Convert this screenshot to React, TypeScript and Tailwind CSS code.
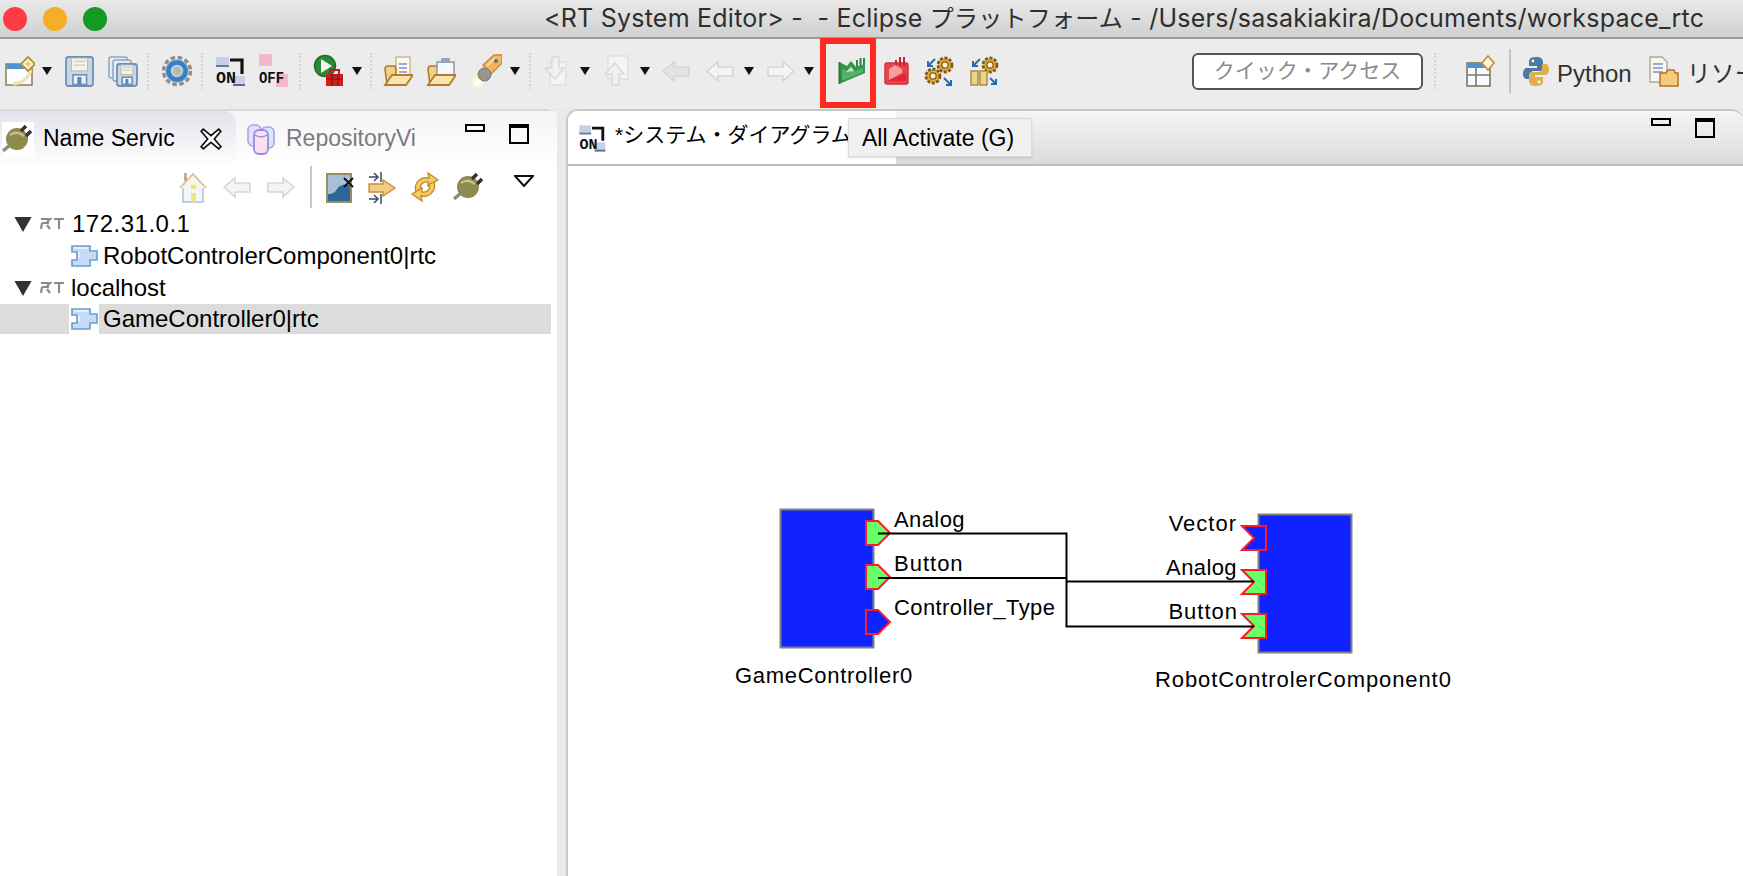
const FONT = "font-['Liberation_Sans','Noto_Sans_CJK_JP',sans-serif]";

function Ico({ children, className = '' }: { children: React.ReactNode; className?: string }) {
  return (
    <svg viewBox="0 0 30 34" className={`w-[30px] h-[34px] shrink-0 ${className}`}>
      {children}
    </svg>
  );
}

function Caret({ className = '' }: { className?: string }) {
  return (
    <svg viewBox="0 0 10 8" className={`w-[10px] h-[8px] shrink-0 mr-[-2px] ${className}`}>
      <path d="M0 0H10L5 8Z" fill="#111" />
    </svg>
  );
}

function Sep({ className = '' }: { className?: string }) {
  return <div className={`w-[2px] h-[36px] shrink-0 border-l-2 border-dotted border-[#d4d4d0] ${className}`} />;
}

const NewIcon = ({ className }: { className?: string }) => (
  <Ico className={className}>
    <rect x="1" y="10" width="26" height="21" fill="#fbfdff" stroke="#8f8458" strokeWidth="1.6" />
    <rect x="1.800" y="10" width="19" height="5" fill="#4f93d2" />
    <path d="M8 30Q22 29 26 16" fill="none" stroke="#efe3b0" strokeWidth="3" />
    <path d="M23 3L30 10L23 17L16 10Z" fill="#fdf6d8" stroke="#b8913a" strokeWidth="1.8" />
    <path d="M23 7V13M20 10H26" stroke="#e4be6a" strokeWidth="1.4" />
  </Ico>
);

const Floppy = ({ x = 2, y = 4, w = 26 }: { x?: number; y?: number; w?: number }) => (
  <g>
    <rect x={x} y={y} width={w} height={w + 2} rx="2.500" fill="#c9d6e6" stroke="#6d8fb8" strokeWidth="1.8" />
    <rect x={x + w * 0.2} y={y + 1} width={w * 0.6} height={w * 0.48} fill="#f3f2ea" stroke="#b9b9a8" strokeWidth="1" />
    <path d={`M${x + w * 0.28} ${y + w * 0.16}H${x + w * 0.72}M${x + w * 0.28} ${y + w * 0.3}H${x + w * 0.72}`} stroke="#c3c3b4" strokeWidth="1" />
    <rect x={x + w * 0.26} y={y + w * 0.66} width={w * 0.5} height={w * 0.36} fill="#eef2f7" stroke="#6d8fb8" strokeWidth="1.6" />
    <rect x={x + w * 0.42} y={y + w * 0.74} width={w * 0.15} height={w * 0.28} fill="#5f86b5" />
  </g>
);

const SaveIcon = ({ className }: { className?: string }) => (
  <Ico className={className}>
    <Floppy x={2} y={3} w={27} />
  </Ico>
);

const SaveAllIcon = ({ className }: { className?: string }) => (
  <Ico className={className}>
    <rect x="1" y="3" width="18" height="21" rx="2" fill="#e6ecf3" stroke="#8ba4c3" strokeWidth="1.5" />
    <rect x="5" y="6" width="18" height="21" rx="2" fill="#e6ecf3" stroke="#8ba4c3" strokeWidth="1.5" />
    <Floppy x={9} y={10} w={20} />
  </Ico>
);

const GearIcon = ({ className }: { className?: string }) => (
  <Ico className={className}>
    <circle cx="15" cy="17" r="13.500" fill="none" stroke="#8e8e8e" strokeWidth="3.500" strokeDasharray="4.500 2.600" />
    <circle cx="15" cy="17" r="11.500" fill="#a8a8a8" />
    <circle cx="15" cy="17" r="8.500" fill="#c8cfd2" stroke="#2f82cc" strokeWidth="4.500" />
    <circle cx="15" cy="17" r="4" fill="#b6b6b2" />
  </Ico>
);

const OnIcon = ({ className }: { className?: string }) => (
  <Ico className={className}>
    <rect x="1" y="3" width="13" height="10" fill="#c6d1e6" />
    <rect x="1" y="11" width="13" height="2" fill="#6f7a90" />
    <path d="M15 6H27V20" fill="none" stroke="#111" strokeWidth="3.200" />
    <rect x="18" y="22" width="12" height="10" fill="#c6d1e6" />
    <rect x="18" y="30" width="12" height="2" fill="#5f6a80" />
    <text x="1" y="29" className="font-['Liberation_Mono',monospace]" fontSize="17" fontWeight="700" fill="#111" textLength="20" lengthAdjust="spacingAndGlyphs">ON</text>
  </Ico>
);

const OffIcon = ({ className }: { className?: string }) => (
  <Ico className={className}>
    <rect x="1" y="0" width="13" height="12" fill="#f5b6cf" />
    <rect x="18" y="20" width="13" height="13" fill="#f5b6cf" />
    <text x="1" y="29" className="font-['Liberation_Mono',monospace]" fontSize="16" fontWeight="700" fill="#111" textLength="25" lengthAdjust="spacingAndGlyphs">OFF</text>
  </Ico>
);

const RunIcon = ({ className }: { className?: string }) => (
  <Ico className={className}>
    <circle cx="12" cy="12" r="10.500" fill="#2c8a34" stroke="#1f6d2a" strokeWidth="1.4" />
    <path d="M8 5L19 12L8 19Z" fill="#f2f6ee" />
    <rect x="13" y="20" width="17" height="12" fill="#d01f1f" />
    <rect x="17" y="16" width="9" height="5" fill="none" stroke="#c01c1c" strokeWidth="2" />
    <path d="M13 25H30M19 20V32M25 20V32" stroke="#7e1212" strokeWidth="1" />
  </Ico>
);

const OpenFile = ({ className }: { className?: string }) => (
  <Ico className={className}>
    <rect x="13" y="3" width="14" height="22" fill="#fdfbf1" stroke="#c9bc8e" strokeWidth="1.5" />
    <path d="M16 10H24M16 14H24M16 18H24" stroke="#7d93c9" strokeWidth="1.6" />
    <path d="M2 15Q2 12 5 12H12L13 16V22L4 31Z" fill="#f3cf88" stroke="#b47a2a" strokeWidth="1.6" />
    <path d="M2 31L9 21H30L23 31Z" fill="#fae3ad" stroke="#b47a2a" strokeWidth="1.8" />
  </Ico>
);

const OpenClip = ({ className }: { className?: string }) => (
  <Ico className={className}>
    <path d="M2 15Q2 12 5 12H12L13 16V22L4 31Z" fill="#f3cf88" stroke="#b47a2a" strokeWidth="1.6" />
    <rect x="11" y="8" width="17" height="15" fill="#f4f7fb" stroke="#8d97a8" strokeWidth="1.5" />
    <rect x="15" y="4" width="9" height="5" rx="1" fill="#97a3b6" />
    <path d="M2 31L9 21H30L23 31Z" fill="#fae3ad" stroke="#b47a2a" strokeWidth="1.8" />
  </Ico>
);

const PenIcon = ({ className }: { className?: string }) => (
  <Ico className={className}>
    <circle cx="6" cy="27" r="6" fill="#fdf8cc" />
    <path d="M1 33L5 23L11 29Z" fill="#ffffff" />
    <path d="M11 11L22 1L30 1L30 9L19 20Z" fill="#f2b660" stroke="#c48a34" strokeWidth="1.300" />
    <path d="M15 12L23 4" stroke="#fbdca0" strokeWidth="2" />
    <circle cx="24" cy="7" r="2" fill="#5c7080" />
    <circle cx="12.500" cy="20.500" r="6.500" fill="#96968e" stroke="#777" strokeWidth="1" />
  </Ico>
);

const GhostDown = ({ className }: { className?: string }) => (
  <Ico className={className}>
    <rect x="10" y="8" width="16" height="23" fill="#f4f4f4" stroke="#dfdfdf" strokeWidth="1.5" />
    <path d="M12 3H19V14H24L15 25L5 14H12Z" fill="#f1f1f1" stroke="#d9d9d9" strokeWidth="1.5" />
  </Ico>
);

const GhostUp = ({ className }: { className?: string }) => (
  <Ico className={className}>
    <rect x="8" y="2" width="20" height="23" fill="#f4f4f4" stroke="#dfdfdf" strokeWidth="1.5" />
    <path d="M12 31H19V20H24L15 9L5 20H12Z" fill="#f1f1f1" stroke="#d9d9d9" strokeWidth="1.5" />
  </Ico>
);

const ArrowLeft = ({ className, solid = false }: { className?: string; solid?: boolean }) => (
  <Ico className={className}>
    <path d="M2 17L13 8V13H28V22H13V27Z" fill={solid ? '#e4e4e4' : '#f4f4f4'} stroke="#d6d6d6" strokeWidth="1.6" />
  </Ico>
);

const ArrowRight = ({ className }: { className?: string }) => (
  <Ico className={className}>
    <path d="M28 17L17 8V13H2V22H17V27Z" fill="#f4f4f4" stroke="#d6d6d6" strokeWidth="1.6" />
  </Ico>
);

const ActivateIcon = ({ className }: { className?: string }) => (
  <Ico className={className}>
    <path d="M3 8L11 12L15 7L20 13L29 10V19L3 30Z" fill="#35934a" />
    <path d="M6 15L11 17L15 12L19 17L27 14V18L8 26H6Z" fill="#55b264" />
    <path d="M10 18L15 13L18 17Z" fill="#c4e8c4" />
    <path d="M3.500 8V30" stroke="#267a34" strokeWidth="2" />
    <path d="M21 13V6M24.500 12V4M28 11V4" stroke="#2f8a3e" strokeWidth="2" />
  </Ico>
);

const DeactivateIcon = ({ className }: { className?: string }) => (
  <Ico className={className}>
    <rect x="3" y="9" width="23" height="21" rx="2" fill="#e8424c" stroke="#d0303a" strokeWidth="1.4" />
    <path d="M7 25V15L13 11L20 15V19L7 26Z" fill="#f79da0" />
    <path d="M7 26L24 19V27H7Z" fill="#e02632" />
    <path d="M14 11V6M18 12V3M22 12V3" stroke="#c72630" strokeWidth="2" />
  </Ico>
);

const Cog = ({ cx, cy, r }: { cx: number; cy: number; r: number }) => (
  <g>
    <circle cx={cx} cy={cy} r={r} fill="#e2a93c" stroke="#7f5a22" strokeWidth="2.800" strokeDasharray="3 1.600" />
    <circle cx={cx} cy={cy} r={r * 0.45} fill="#fff3d0" stroke="#7d5b1e" strokeWidth="1.300" />
  </g>
);

const ResetIcon = ({ className }: { className?: string }) => (
  <Ico className={className}>
    <Cog cx={21} cy={11} r={7} />
    <Cog cx={9} cy={22} r={7} />
    <path d="M11 5L4 12M4 7V12H9" fill="none" stroke="#2a6bb0" strokeWidth="2" />
    <path d="M20 24L27 31M27 26V31H22" fill="none" stroke="#2a6bb0" strokeWidth="2" />
  </Ico>
);

const PauseIcon = ({ className }: { className?: string }) => (
  <Ico className={className}>
    <Cog cx={21} cy={11} r={7} />
    <rect x="2" y="17" width="7" height="14" fill="#ecd48a" stroke="#a8883a" strokeWidth="1.400" />
    <rect x="11" y="17" width="7" height="14" fill="#ecd48a" stroke="#a8883a" strokeWidth="1.400" />
    <path d="M11 5L4 12M4 7V12H9" fill="none" stroke="#2a6bb0" strokeWidth="2" />
    <path d="M21 24L27 30M27 25V30H22" fill="none" stroke="#2a6bb0" strokeWidth="2" />
  </Ico>
);

const PerspectiveIcon = ({ className }: { className?: string }) => (
  <Ico className={className}>
    <rect x="2" y="9" width="23" height="23" fill="#f6fbff" stroke="#7d7a60" strokeWidth="1.600" />
    <rect x="2.800" y="9" width="17" height="5" fill="#4f93d2" />
    <path d="M2 21H25M11 14V32" stroke="#7d7a60" strokeWidth="1.600" />
    <path d="M23 2L29 9L23 16L17 9Z" fill="#fdf6d8" stroke="#b8913a" strokeWidth="1.600" />
  </Ico>
);

const PythonIcon = ({ className }: { className?: string }) => (
  <Ico className={className}>
    <path d="M15 3C8 3 8 6 8 9V12H16V14H6C3 14 2 17 2 20C2 23 3 25 6 25H9V21C9 18 11 17 13 17H19C21 17 22 16 22 14V8C22 5 20 3 15 3Z" fill="#4a7aa6" />
    <path d="M15 32C22 32 22 29 22 26V23H14V21H24C27 21 28 18 28 15C28 12 27 10 24 10H21V14C21 17 19 18 17 18H11C9 18 8 19 8 21V27C8 30 10 32 15 32Z" fill="#dcb050" />
    <circle cx="12" cy="7" r="1.400" fill="#fff" />
    <circle cx="18" cy="28" r="1.400" fill="#fff" />
  </Ico>
);

const ResourceIcon = ({ className }: { className?: string }) => (
  <Ico className={className}>
    <path d="M1 3H13L18 8V28H1Z" fill="#f6f6f2" stroke="#b0a888" strokeWidth="1.400" />
    <path d="M4 10H14M4 14H14M4 18H14" stroke="#7f94c4" strokeWidth="1.400" />
    <path d="M11 19H17L19 16H25L26 19H29V32H11Z" fill="#f6cb7c" stroke="#b8702a" strokeWidth="1.500" />
  </Ico>
);

const PlugIcon = ({ className }: { className?: string }) => (
  <Ico className={className}>
    <path d="M1 29L8 23" stroke="#8f8f80" strokeWidth="3.500" />
    <circle cx="15" cy="17" r="11" fill="#8f8a4e" />
    <path d="M8 13Q15 8 22 14" fill="none" stroke="#c4c08c" strokeWidth="2.400" />
    <path d="M19 9L24 4M24 14L29 9" stroke="#333" strokeWidth="3.500" />
  </Ico>
);

const RepoIcon = ({ className }: { className?: string }) => (
  <Ico className={className}>
    <rect x="2" y="3" width="13" height="21" rx="5" fill="#e6defa" stroke="#a9a3e8" strokeWidth="1.600" />
    <rect x="15" y="5" width="13" height="21" rx="5" fill="#d9e6fb" stroke="#a9a3e8" strokeWidth="1.600" />
    <rect x="8" y="8" width="14" height="24" rx="5" fill="#fbdff0" stroke="#8f8fea" strokeWidth="1.800" />
    <path d="M9 13Q15 17 21 13" fill="none" stroke="#8f8fea" strokeWidth="1.500" />
  </Ico>
);

const HomeIcon = ({ className }: { className?: string }) => (
  <Ico className={className}>
    <rect x="6" y="3" width="3" height="8" fill="#c8a898" />
    <rect x="5" y="17" width="20" height="15" fill="#f3f6fa" stroke="#aebfd6" strokeWidth="1.500" />
    <path d="M2 18L15 4L28 18" fill="#f8f6ea" stroke="#d3bf9c" strokeWidth="1.800" />
    <rect x="13" y="15" width="5" height="4" fill="#e8e87a" />
    <rect x="13" y="23" width="5" height="9" fill="#e8e87a" />
  </Ico>
);

const DisconnectIcon = ({ className }: { className?: string }) => (
  <Ico className={className}>
    <rect x="2" y="4" width="24" height="28" fill="#a8bfd8" stroke="#9b8c60" strokeWidth="2" />
    <path d="M3 31V24Q10 24 12 19Q16 13 25 15V31Z" fill="#2f6498" />
    <path d="M19 8L28 17M28 8L19 17" stroke="#111" strokeWidth="2" />
  </Ico>
);

const CollapseIcon = ({ className }: { className?: string }) => (
  <Ico className={className}>
    <path d="M2 7H10M7 3L11 7L7 11M14 2V12" fill="none" stroke="#3e4a66" strokeWidth="1.500" />
    <path d="M2 14H16V10L28 18L16 26V22H2Z" fill="#f3cd83" stroke="#c88f38" strokeWidth="1.400" />
    <path d="M2 29H10M7 25L11 29L7 33M14 24V34" fill="none" stroke="#3e4a66" strokeWidth="1.500" />
  </Ico>
);

const RefreshIcon = ({ className }: { className?: string }) => (
  <Ico className={className}>
    <path d="M6 22C3 13 11 6 19 8L18 3L28 10L18 16V12C13 11 9 15 11 20Z" fill="#f3cd63" stroke="#c08a28" strokeWidth="1.300" />
    <path d="M24 12C27 21 19 28 11 26L12 31L2 24L12 18V22C17 23 21 19 19 14Z" fill="#f3cd63" stroke="#c08a28" strokeWidth="1.300" />
  </Ico>
);

function Rt() {
  return (
    <svg viewBox="0 0 26 14" className="w-[26px] h-[14px] shrink-0">
      <path d="M2 2H11L8 5M3 6H10M3 6L2 12M8 8L11 12M15 2H25M20 2V12" fill="none" stroke="#8a8a8a" strokeWidth="2.200" />
    </svg>
  );
}

function Comp() {
  return (
    <svg viewBox="0 0 28 24" className="w-[28px] h-[24px] shrink-0">
      <path d="M2 2H20V7H27V16H20V22H2V16H7V8H2Z" fill="#c6dbf6" stroke="#6f9fd0" strokeWidth="1.700" />
      <path d="M4 4H18M9 8V14" stroke="#eef6ff" strokeWidth="1.600" />
    </svg>
  );
}

function MinMax({ className = '' }: { className?: string }) {
  return (
    <div className={`flex items-start ${className}`}>
      <div className="w-[20px] h-[8px] border-2 border-black" />
      <div className="ml-[24px] w-[20px] h-[20px] border-2 border-black border-t-[4px]" />
    </div>
  );
}

function Tree() {
  return (
    <div className="text-[24px] text-black leading-[32px]">
      <div className="h-[32px] flex items-center pl-[14px]">
        <svg viewBox="0 0 16 14" className="w-[18px] h-[15px]"><path d="M0 0H16L8 14Z" fill="#333" /></svg>
        <div className="ml-[7px]"><Rt /></div>
        <span className="ml-[7px] tracking-[0.5px]">172.31.0.1</span>
      </div>
      <div className="h-[32px] flex items-center pl-[70px]">
        <Comp />
        <span className="ml-[5px]">RobotControlerComponent0|rtc</span>
      </div>
      <div className="h-[32px] flex items-center pl-[14px]">
        <svg viewBox="0 0 16 14" className="w-[18px] h-[15px]"><path d="M0 0H16L8 14Z" fill="#333" /></svg>
        <div className="ml-[7px]"><Rt /></div>
        <span className="ml-[6px]">localhost</span>
      </div>
      <div className="h-[30px] flex items-center bg-[#dcdcdc] w-[551px]">
        <div className="ml-[69px] w-[30px] h-[30px] bg-white flex items-center pl-[1px]"><Comp /></div>
        <span className="ml-[4px]">GameController0|rtc</span>
      </div>
    </div>
  );
}

function Port({ x, y, out, fill }: { x: number; y: number; out: boolean; fill: string }) {
  const d = out
    ? `M${x} ${y - 12}H${x + 12}L${x + 24} ${y}L${x + 12} ${y + 12}H${x}Z`
    : `M${x} ${y - 12}H${x + 24}V${y + 12}H${x}L${x + 12} ${y}Z`;
  return <path d={d} fill={fill} stroke="#ff1a2a" strokeWidth="2" />;
}

function Diagram() {
  // free canvas: the viewBox uses page coordinates
  const ox = 568;
  const oy = 166;
  return (
    <div className="relative flex-1 bg-white text-[22px] text-black">
      <svg className="absolute inset-0 w-full h-full" viewBox={`${ox} ${oy} 1176 710`} preserveAspectRatio="xMinYMin slice">
        <rect x="780.5" y="509.5" width="93" height="138" fill="#0f22ff" stroke="#808080" strokeWidth="2" />
        <rect x="1258.5" y="514.5" width="93" height="138" fill="#0f22ff" stroke="#808080" strokeWidth="2" />
        <Port x={866} y={533} out fill="#66ff66" />
        <Port x={866} y={577} out fill="#66ff66" />
        <Port x={866} y={622} out fill="#0f22ff" />
        <Port x={1242} y={538} out={false} fill="#0f22ff" />
        <Port x={1242} y={582} out={false} fill="#66ff66" />
        <Port x={1242} y={626} out={false} fill="#66ff66" />
        <path d="M878 533.500H1066.500V626.500H1254M878 578H1066.500M1066.500 581.500H1254" fill="none" stroke="#000" strokeWidth="2" />
      </svg>
      <span className="absolute left-[326px] top-[342px] leading-[24px] tracking-[0.4px]">Analog</span>
      <span className="absolute left-[326px] top-[386px] leading-[24px] tracking-[1px]">Button</span>
      <span className="absolute left-[326px] top-[430px] leading-[24px] tracking-[0.4px]">Controller_Type</span>
      <span className="absolute left-[167px] top-[498px] leading-[24px] tracking-[0.7px]">GameController0</span>
      <span className="absolute right-[506px] top-[346px] leading-[24px] tracking-[1px]">Vector</span>
      <span className="absolute right-[506px] top-[390px] leading-[24px] tracking-[0.4px]">Analog</span>
      <span className="absolute right-[505px] top-[434px] leading-[24px] tracking-[1px]">Button</span>
      <span className="absolute left-[587px] top-[502px] leading-[24px] tracking-[0.9px]">RobotControlerComponent0</span>
    </div>
  );
}

export default function App() {
  return (
    <div className={`relative w-[1743px] h-[876px] overflow-hidden bg-[#e9e9e9] flex flex-col ${FONT}`}>
      {/* title bar */}
      <div className="h-[39px] shrink-0 flex items-center bg-gradient-to-b from-[#e9e9e9] to-[#d0d0d0] border-b-2 border-[#9c9c9c]">
        <div className="ml-[3px] w-[24px] h-[24px] rounded-full bg-[#fc3b44]" />
        <div className="ml-[16px] w-[24px] h-[24px] rounded-full bg-[#f6ae26]" />
        <div className="ml-[16px] w-[24px] h-[24px] rounded-full bg-[#149a24]" />
        <div className="ml-[437px] text-[25px] tracking-[0.23px] text-[#2e2e2e] whitespace-pre font-['Inter','Noto_Sans_CJK_JP',sans-serif]">
          {'<RT System Editor> -  - Eclipse '}
          <span className="text-[24px]">プラットフォーム</span>
          {' - /Users/sasakiakira/Documents/workspace_rtc'}
        </div>
      </div>

      {/* main toolbar */}
      <div className="h-[70px] shrink-0 flex items-center bg-[#ececec] pl-[5px] pb-[6px] whitespace-nowrap">
        <NewIcon />
        <Caret className="ml-[7px]" />
        <SaveIcon className="ml-[14px]" />
        <SaveAllIcon className="ml-[14px]" />
        <Sep className="ml-[9px]" />
        <GearIcon className="ml-[13px]" />
        <Sep className="ml-[9px]" />
        <OnIcon className="ml-[12px]" />
        <OffIcon className="ml-[13px]" />
        <Sep className="ml-[11px]" />
        <RunIcon className="ml-[12px]" />
        <Caret className="ml-[9px]" />
        <Sep className="ml-[10px]" />
        <OpenFile className="ml-[11px]" />
        <OpenClip className="ml-[13px]" />
        <PenIcon className="ml-[16px]" />
        <Caret className="ml-[8px]" />
        <Sep className="ml-[11px]" />
        <GhostDown className="ml-[9px]" />
        <Caret className="ml-[10px]" />
        <GhostUp className="ml-[12px]" />
        <Caret className="ml-[10px]" />
        <ArrowLeft solid className="ml-[13px]" />
        <ArrowLeft className="ml-[14px]" />
        <Caret className="ml-[9px]" />
        <ArrowRight className="ml-[14px]" />
        <Caret className="ml-[8px]" />
        <ActivateIcon className="ml-[24px]" />
        <DeactivateIcon className="ml-[16px]" />
        <ResetIcon className="ml-[12px]" />
        <PauseIcon className="ml-[15px]" />
        <div className="ml-[193px] w-[231px] h-[37px] shrink-0 rounded-[6px] border-2 border-[#555] bg-white flex items-center justify-center text-[21px] text-[#8a8a8a]">クイック・アクセス</div>
        <Sep className="ml-[11px]" />
        <PerspectiveIcon className="ml-[29px]" />
        <div className="ml-[14px] w-[2px] h-[44px] shrink-0 bg-[#c4c4c4]" />
        <PythonIcon className="ml-[10px]" />
        <span className="ml-[6px] mt-[6px] text-[24px] text-[#333]">Python</span>
        <ResourceIcon className="ml-[17px]" />
        <span className="ml-[8px] mt-[6px] text-[24px] text-[#333]">リソー</span>
      </div>

      {/* panels */}
      <div className="flex-1 min-h-0 flex gap-[9px]">
        <div className="w-[557px] shrink-0 flex flex-col bg-white border-t-2 border-[#d8d8dc] rounded-tr-[12px]">
          <div className="h-[55px] shrink-0 flex items-center bg-gradient-to-b from-[#f4f4f6] to-white">
            <div className="w-[236px] h-full flex items-center bg-gradient-to-b from-[#e2e3ea] to-white rounded-tr-[12px] text-[23px] text-black">
              <div className="ml-[2px] w-[32px] h-[34px] bg-white"><PlugIcon /></div>
              <span className="ml-[9px]">Name Servic</span>
              <svg viewBox="0 0 20 20" className="ml-[25px] w-[22px] h-[22px]">
                <path d="M3 1L10 7L17 1L19 3L13 10L19 17L17 19L10 13L3 19L1 17L7 10L1 3Z" fill="#fff" stroke="#111" strokeWidth="1.500" />
              </svg>
            </div>
            <RepoIcon className="ml-[10px]" />
            <span className="ml-[10px] text-[23px] text-[#7a7a80]">RepositoryVi</span>
            <MinMax className="ml-[49px] -mt-[10px]" />
          </div>
          <div className="h-[42px] shrink-0 flex items-center pl-[178px]">
            <HomeIcon />
            <ArrowLeft className="ml-[14px]" />
            <ArrowRight className="ml-[14px]" />
            <div className="ml-[14px] w-[2px] h-[42px] bg-[#c8c8c8]" />
            <DisconnectIcon className="ml-[13px]" />
            <CollapseIcon className="ml-[12px]" />
            <RefreshIcon className="ml-[13px]" />
            <PlugIcon className="ml-[13px]" />
            <svg viewBox="0 0 20 12" className="ml-[31px] mb-[12px] w-[20px] h-[12px]">
              <path d="M1 1H19L10 11Z" fill="#fff" stroke="#111" strokeWidth="2" />
            </svg>
          </div>
          <Tree />
        </div>

        <div className="flex-1 min-w-0 flex flex-col bg-white border-t-2 border-l-2 border-[#c9c9c4] rounded-t-[12px] overflow-hidden">
          <div className="h-[55px] shrink-0 flex items-center bg-gradient-to-b from-[#f5f5f5] to-[#dcdcdc] border-b-2 border-[#b9bccd]">
            <div className="w-[328px] h-full flex items-center bg-white text-[21px] text-black">
              <OnIcon className="ml-[9px] scale-90" />
              <span className="ml-[8px] -mt-[6px] whitespace-nowrap">*システム・ダイアグラム</span>
            </div>
            <MinMax className="ml-[755px] -mt-[20px]" />
          </div>
          <Diagram />
        </div>
      </div>

      {/* red highlight over the toolbar button */}
      <div className="absolute left-[820px] top-[38px] w-[56px] h-[70px] border-[6px] border-[#ff2a1f]" />

      {/* tooltip */}
      <div className="absolute left-[848px] top-[118px] w-[184px] h-[39px] flex items-center pl-[13px] pt-[1px] bg-[#f0f0f0] border border-[#d9d9d9] shadow-sm text-[23px] text-black">All Activate (G)</div>
    </div>
  );
}
